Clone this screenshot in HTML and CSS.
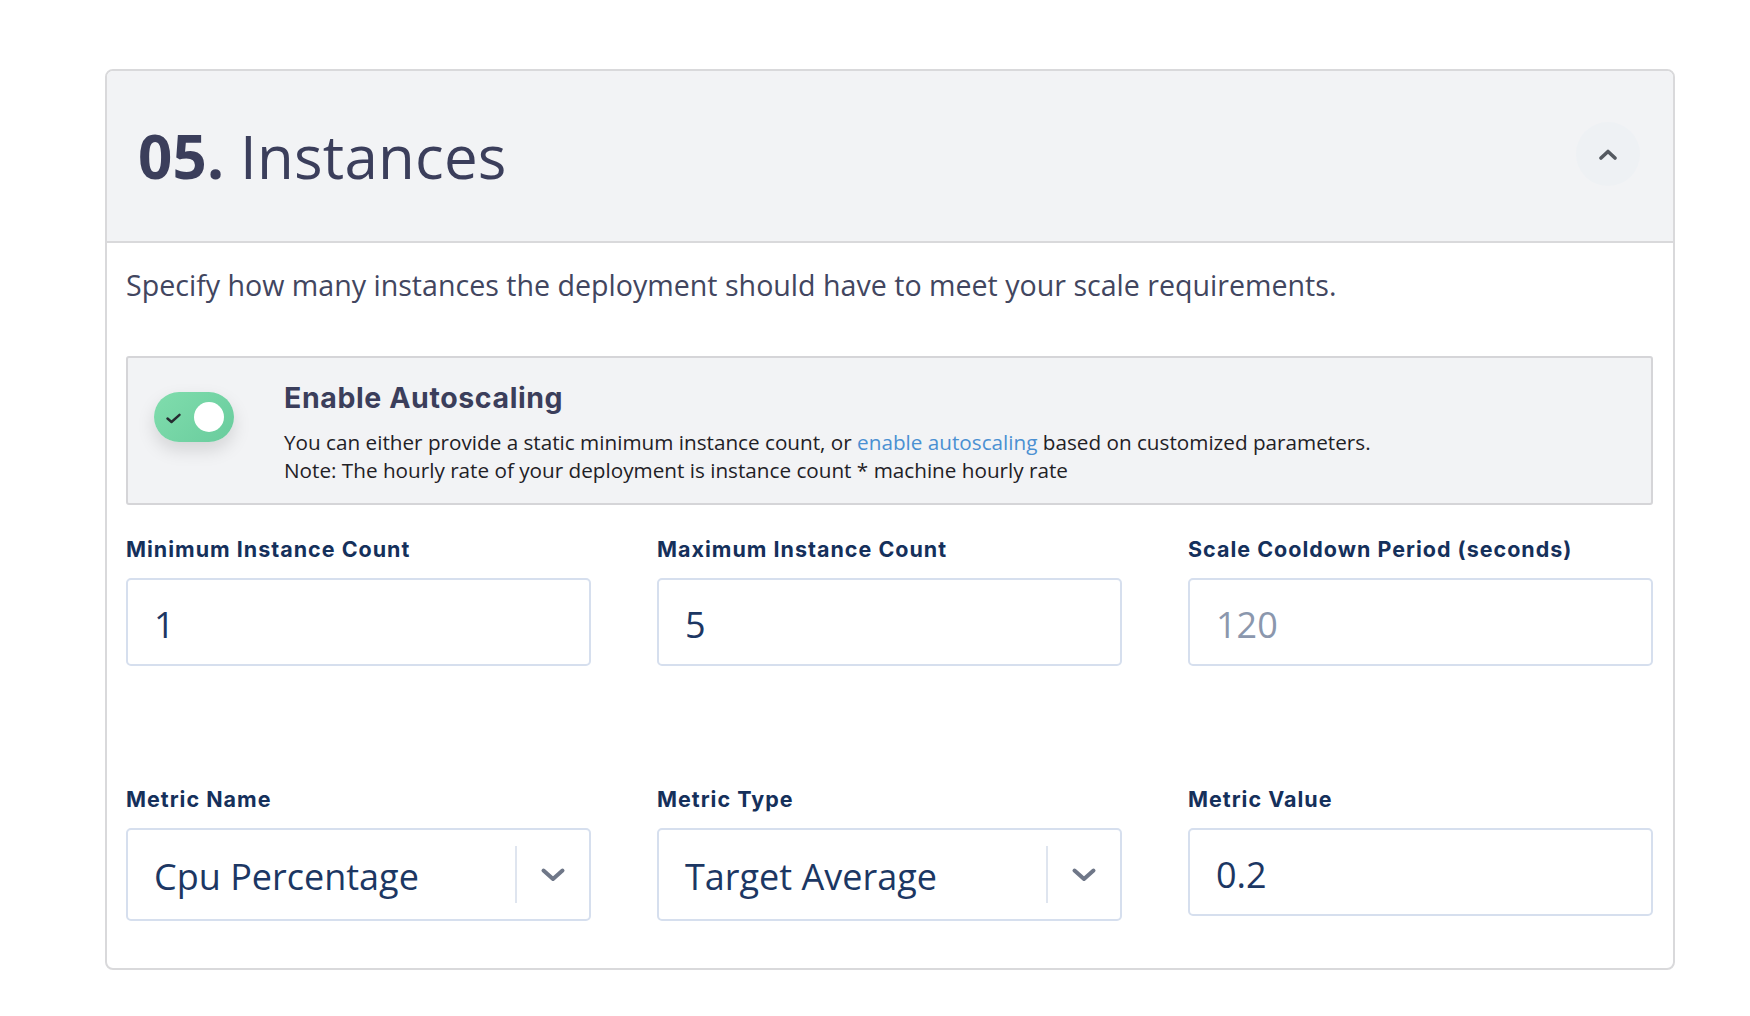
FILE: index.html
```html
<!DOCTYPE html>
<html lang="en">
<head>
<meta charset="utf-8">
<title>Instances</title>
<link rel="stylesheet" href="styles.css">
</head>
<body>
<section class="card">
  <header class="card-header">
    <h2 class="title"><strong>05.</strong> Instances</h2>
    <button class="collapse" type="button" aria-label="Collapse">
      <svg width="18" height="11" viewBox="0 0 18 11"><path d="M2 9 L9 2.5 L16 9" fill="none" stroke="#555a61" stroke-width="3.6" stroke-linecap="round" stroke-linejoin="round"/></svg>
    </button>
  </header>
  <div class="card-body">
    <p class="desc">Specify how many instances the deployment should have to meet your scale requirements.</p>
    <div class="autoscale">
      <div class="toggle">
        <svg class="check" width="15" height="11" viewBox="0 0 15 11"><path d="M1.5 5.5 L5.5 9 L13.5 1.8" fill="none" stroke="#262b30" stroke-width="2.4" stroke-linecap="round" stroke-linejoin="round"/></svg>
        <span class="knob"></span>
      </div>
      <div class="autoscale-text">
        <h3 class="autoscale-title">Enable Autoscaling</h3>
        <p class="autoscale-desc">You can either provide a static minimum instance count, or <a href="#" class="link">enable autoscaling</a> based on customized parameters.<br>Note: The hourly rate of your deployment is instance count * machine hourly rate</p>
      </div>
    </div>
    <div class="fields">
      <div class="field">
        <label class="label">Minimum Instance Count</label>
        <div class="input"><span class="value">1</span></div>
      </div>
      <div class="field">
        <label class="label">Maximum Instance Count</label>
        <div class="input"><span class="value">5</span></div>
      </div>
      <div class="field">
        <label class="label">Scale Cooldown Period (seconds)</label>
        <div class="input"><span class="placeholder">120</span></div>
      </div>
      <div class="field">
        <label class="label">Metric Name</label>
        <div class="select">
          <span class="select-value">Cpu Percentage</span>
          <span class="select-sep"></span>
          <span class="select-indicator">
            <svg width="26" height="16" viewBox="0 0 26 16"><path d="M3.5 3.5 L13 12 L22.5 3.5" fill="none" stroke="#6f7788" stroke-width="4" stroke-linecap="round" stroke-linejoin="round"/></svg>
          </span>
        </div>
      </div>
      <div class="field">
        <label class="label">Metric Type</label>
        <div class="select">
          <span class="select-value">Target Average</span>
          <span class="select-sep"></span>
          <span class="select-indicator">
            <svg width="26" height="16" viewBox="0 0 26 16"><path d="M3.5 3.5 L13 12 L22.5 3.5" fill="none" stroke="#6f7788" stroke-width="4" stroke-linecap="round" stroke-linejoin="round"/></svg>
          </span>
        </div>
      </div>
      <div class="field">
        <label class="label">Metric Value</label>
        <div class="input"><span class="value">0.2</span></div>
      </div>
    </div>
  </div>
</section>
</body>
</html>
```

FILE: styles.css
```css
* { box-sizing: border-box; }

html, body {
  margin: 0;
  padding: 0;
  background: #ffffff;
}

body {
  font-family: "Open Sans", "Noto Sans", sans-serif;
  padding: 69px 0 0 105px;
}

.card {
  width: 1570px;
  border: 2px solid #d9d9db;
  border-radius: 8px;
  overflow: hidden;
  background: #ffffff;
}

.card-header {
  height: 172px;
  background: #f2f3f5;
  border-bottom: 2px solid #d9d9db;
  display: flex;
  align-items: center;
  justify-content: space-between;
  padding: 0 33px 0 31px;
}

.title {
  margin: 0;
  font-family: "Open Sans", sans-serif;
  font-size: 60px;
  line-height: 60px;
  font-weight: 400;
  color: #3b3e5b;
  letter-spacing: 0.2px;
}

.title strong {
  font-weight: 700;
}

.collapse {
  width: 64px;
  height: 64px;
  border-radius: 50%;
  border: none;
  background: #eef1f4;
  display: flex;
  align-items: center;
  justify-content: center;
  padding: 0;
  margin-top: -4px;
}

.card-body {
  padding: 23px 20px 47px 19px;
}

.desc {
  margin: 0;
  font-size: 28.6px;
  line-height: 38px;
  color: #42465f;
}

.autoscale {
  margin-top: 52px;
  background: #f2f3f5;
  border: 2px solid #d5d5d8;
  border-radius: 3px;
  display: flex;
  align-items: flex-start;
  padding: 23px 24px 19px 26px;
}

.toggle {
  flex: none;
  width: 80px;
  height: 50px;
  margin-top: 11px;
  border-radius: 25px;
  background: linear-gradient(135deg, #80ddad 0%, #69cc9d 100%);
  box-shadow: 0 8px 18px rgba(0, 0, 0, 0.13);
  display: flex;
  align-items: center;
  justify-content: space-between;
  padding: 0 10px 0 12px;
}

.check {
  display: block;
  margin-top: 2px;
}

.knob {
  width: 30px;
  height: 30px;
  border-radius: 50%;
  background: #ffffff;
}

.autoscale-text {
  margin-left: 50px;
}

.autoscale-title {
  margin: 0;
  font-family: "Inter", "Lato", sans-serif;
  font-weight: 700;
  font-size: 28.5px;
  line-height: 34px;
  letter-spacing: 0.6px;
  color: #3b3e5b;
}

.autoscale-desc {
  margin: 13px 0 0;
  font-size: 20.7px;
  line-height: 28px;
  color: #1f2126;
}

.link {
  color: #4a90d2;
  text-decoration: none;
}

.fields {
  margin-top: 31px;
  display: grid;
  grid-template-columns: repeat(3, 1fr);
  column-gap: 66px;
  row-gap: 120px;
  align-items: start;
}

.field {
  display: flex;
  flex-direction: column;
}

.label {
  font-family: "Inter", "Lato", sans-serif;
  font-weight: 700;
  font-size: 21.5px;
  line-height: 26px;
  letter-spacing: 1px;
  color: #15305b;
  margin-bottom: 16px;
}

.input {
  height: 88px;
  border: 2px solid #d6dfee;
  border-radius: 5px;
  display: flex;
  align-items: center;
  padding: 5px 26px 0;
  font-size: 36px;
  background: #ffffff;
}

.value {
  color: #1c3763;
}

.placeholder {
  color: #8b97ad;
}

.select {
  height: 93px;
  border: 2px solid #d6dfee;
  border-radius: 5px;
  display: flex;
  align-items: center;
  padding-left: 26px;
  background: #ffffff;
}

.select-value {
  flex: 1;
  font-size: 36px;
  color: #1c3763;
  margin-top: 4px;
}

.select-sep {
  width: 2px;
  height: 57px;
  background: #dfe5ef;
}

.select-indicator {
  width: 72px;
  display: flex;
  align-items: center;
  justify-content: center;
}

.select-indicator svg {
  display: block;
}
```
